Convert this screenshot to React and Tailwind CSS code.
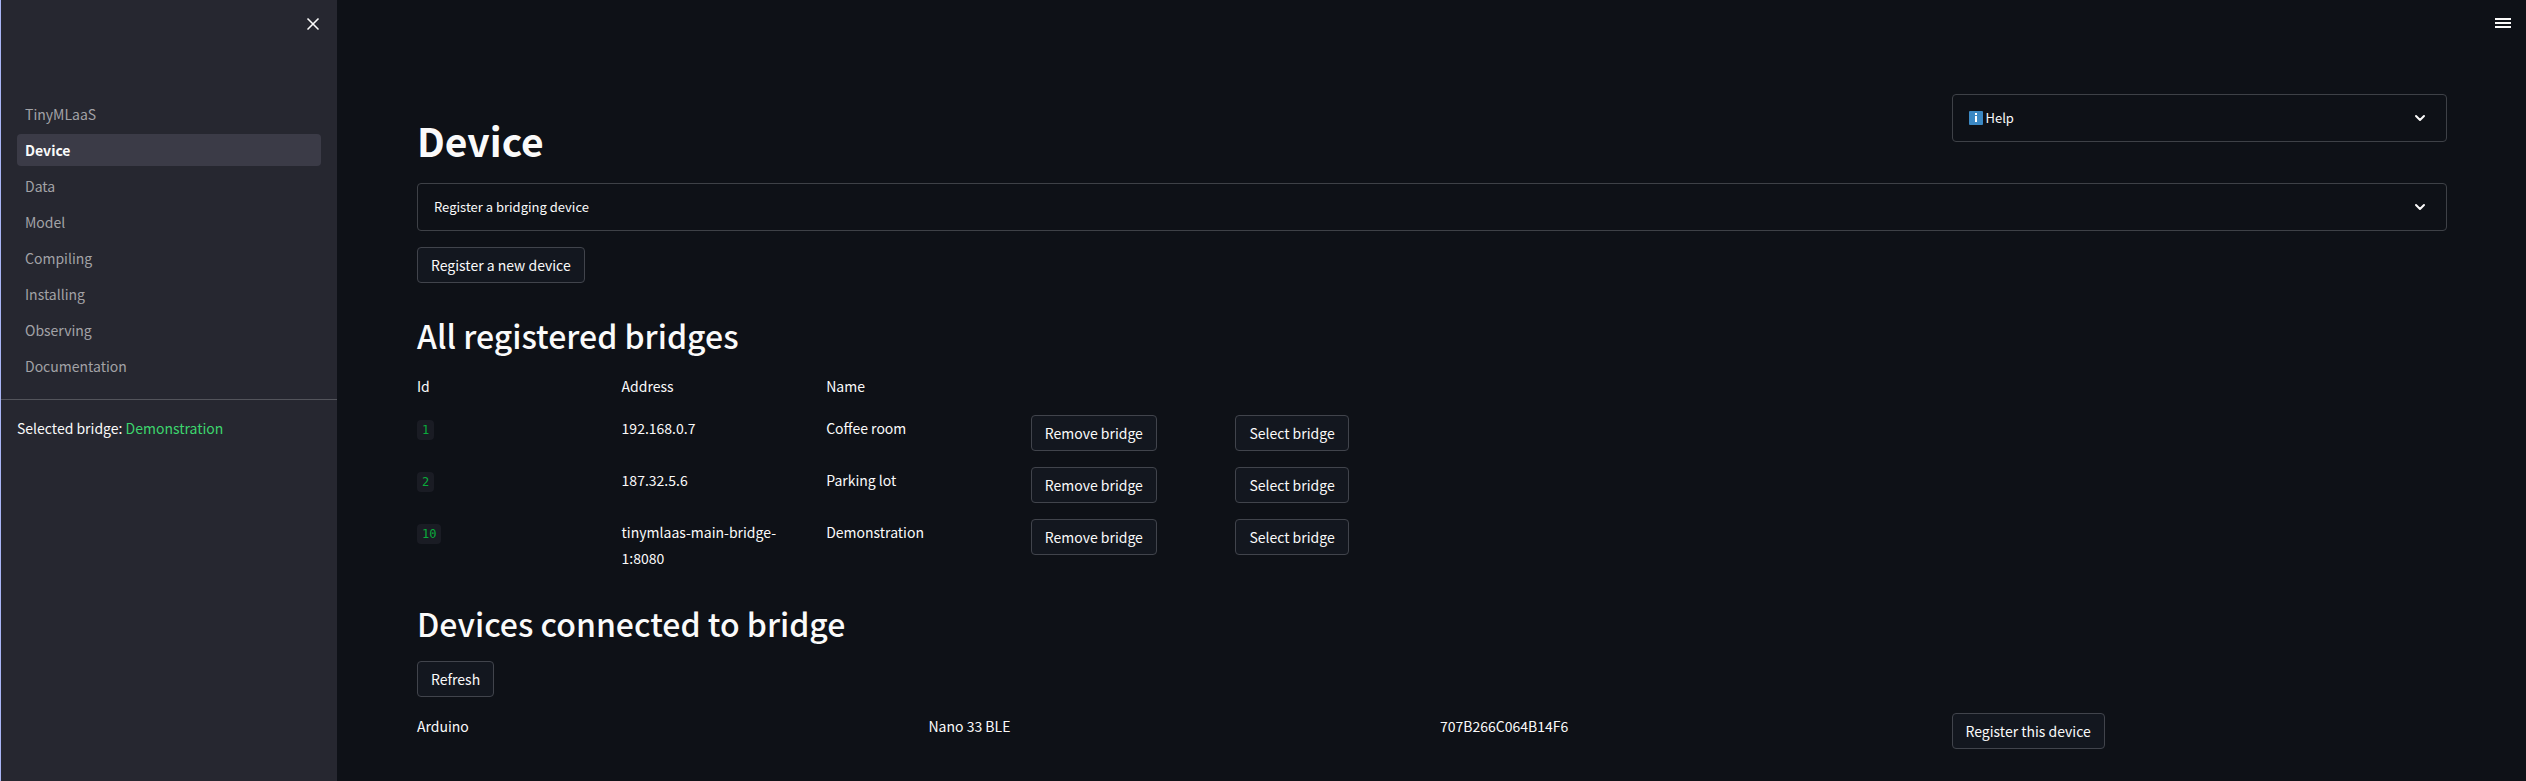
import { ChevronDown, X } from "lucide-react";

const pages = ["TinyMLaaS", "Device", "Data", "Model", "Compiling", "Installing", "Observing", "Documentation"];

const bridges = [
  { id: 1, address: "192.168.0.7", name: "Coffee room" },
  { id: 2, address: "187.32.5.6", name: "Parking lot" },
  { id: 10, address: "tinymlaas-main-bridge-1:8080", name: "Demonstration" },
];

function Button({ children }) {
  return (
    <button
      type="button"
      className="block h-9 whitespace-nowrap rounded border border-[#41444c] bg-[#13171f] px-[13px] leading-6"
    >
      {children}
    </button>
  );
}

function Expander({ children }) {
  return (
    <button
      type="button"
      aria-expanded="false"
      className="flex h-12 w-full items-center justify-between rounded border border-[#3e4147] pl-4 pr-[18px] text-[13px]"
    >
      <span className="flex items-center gap-[3px]">{children}</span>
      <ChevronDown size={16} strokeWidth={3} />
    </button>
  );
}

function SectionTitle({ children }) {
  return <h2 className="pb-[18px] pt-8 text-[32px] font-medium leading-10">{children}</h2>;
}

function Sidebar() {
  return (
    <aside className="w-[337px] shrink-0 border-l border-[#a9b5f5] bg-[#262730]">
      <div className="flex h-24 justify-end px-3.5 pt-3.5">
        <button type="button" aria-label="Close sidebar" className="h-5">
          <X size={20} />
        </button>
      </div>
      <nav className="border-b border-[#53545b] px-4 pb-[15px]">
        <ul>
          {pages.map((page) => (
            <li key={page} className="py-0.5">
              <a
                href={"#" + page}
                className={
                  page === "Device"
                    ? "block h-8 rounded bg-[#3b3b47] px-2 font-bold leading-8"
                    : "block h-8 rounded px-2 leading-8 text-[#a2a2a6]"
                }
              >
                {page}
              </a>
            </li>
          ))}
        </ul>
      </nav>
      <p className="px-4 pt-[15px] leading-[26px]">
        Selected bridge: <span className="text-[#3dd56d]">Demonstration</span>
      </p>
    </aside>
  );
}

export default function App() {
  return (
    <div className="flex min-h-screen bg-[#0e1117] font-['Source_Sans_Pro','Noto_Sans_CJK_SC',sans-serif] text-sm text-[#fafafa]">
      <Sidebar />
      <main className="relative min-w-0 flex-1 pb-8 pl-20 pr-[79px] pt-[94px]">
        <button type="button" aria-label="Menu" className="absolute right-[15px] top-4">
          <svg width="16" height="16" viewBox="0 0 16 16" fill="currentColor">
            <path d="M0 2h16v2H0zM0 6h16v2H0zM0 10h16v2H0z" />
          </svg>
        </button>

        <div className="grid grid-cols-4 gap-4">
          <h1 className="col-span-3 pt-5 text-[39px] font-bold leading-[53px]">Device</h1>
          <div>
            <Expander>
              <svg width="14" height="14" viewBox="0 0 14 14">
                <rect width="14" height="14" rx="1" fill="#3b88c3" />
                <path d="M6 2h2v2H6zM6 5h2v6H6z" fill="#fff" />
              </svg>
              Help
            </Expander>
          </div>
        </div>

        <div className="pb-4 pt-4">
          <Expander>Register a bridging device</Expander>
        </div>
        <Button>Register a new device</Button>

        <SectionTitle>All registered bridges</SectionTitle>
        <table className="w-[calc(50%+8px)] table-fixed text-left">
          <thead>
            <tr className="h-[42px] align-top leading-[26px]">
              <th className="font-normal">Id</th>
              <th className="font-normal">Address</th>
              <th className="font-normal">Name</th>
              <td />
              <td />
            </tr>
          </thead>
          <tbody>
            {bridges.map((bridge) => (
              <tr key={bridge.id} className="h-[52px] align-top leading-[26px]">
                <td>
                  <code className="rounded bg-[#1a1c24] px-[5px] py-[3px] font-['DejaVu_Sans_Mono',monospace] text-xs text-[#09ab3b]">
                    {bridge.id}
                  </code>
                </td>
                <td className="pr-4">{bridge.address}</td>
                <td>{bridge.name}</td>
                <td>
                  <Button>Remove bridge</Button>
                </td>
                <td>
                  <Button>Select bridge</Button>
                </td>
              </tr>
            ))}
          </tbody>
        </table>

        <SectionTitle>Devices connected to bridge</SectionTitle>
        <Button>Refresh</Button>
        <table className="mt-4 w-[calc(100%+16px)] table-fixed">
          <tbody>
            <tr className="align-top leading-[26px]">
              <td>Arduino</td>
              <td>Nano 33 BLE</td>
              <td>707B266C064B14F6</td>
              <td>
                <Button>Register this device</Button>
              </td>
            </tr>
          </tbody>
        </table>
      </main>
    </div>
  );
}
